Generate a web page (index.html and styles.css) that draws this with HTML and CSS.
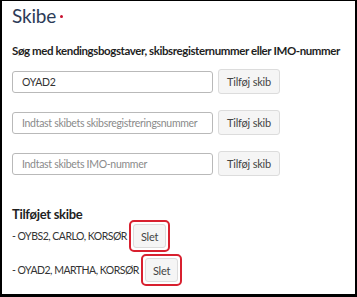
FILE: index.html
```html
<!DOCTYPE html>
<html lang="da">
  <head>
    <meta charset="UTF-8" />
    <title>Skibe</title>
    <link rel="stylesheet" href="styles.css">
  </head>
  <body>
    <div class="page">
      <h1 class="title">Skibe<span class="required"></span></h1>
      <p class="label">Søg med kendingsbogstaver, skibsregisternummer eller IMO-nummer</p>

      <div class="search-row">
        <input class="field" type="text" value="OYAD2" />
        <button class="btn">Tilføj skib</button>
      </div>
      <div class="search-row">
        <input class="field" type="text" placeholder="Indtast skibets skibsregistreringsnummer" />
        <button class="btn">Tilføj skib</button>
      </div>
      <div class="search-row">
        <input class="field" type="text" placeholder="Indtast skibets IMO-nummer" />
        <button class="btn">Tilføj skib</button>
      </div>

      <h2 class="subtitle">Tilføjet skibe</h2>
      <ul class="ships">
        <li class="ship">- OYBS2, CARLO, KORSØR<span class="focus"><button class="btn btn-small">Slet</button></span></li>
        <li class="ship">- OYAD2, MARTHA, KORSØR<span class="focus"><button class="btn btn-small">Slet</button></span></li>
      </ul>
    </div>
  </body>
</html>
```

FILE: styles.css
```css
body {
  margin: 0;
  padding: 1px 2px 3px 2px;
  background: #000;
  font-family: Lato, 'Open Sans', sans-serif;
  letter-spacing: -0.3px;
  color: #222;
}

.page {
  background: #fff;
  height: 293px;
  padding: 0 10px;
  box-sizing: border-box;
  overflow: hidden;
}

.title {
  margin: 0;
  padding-top: 3px;
  font-size: 19px;
  line-height: 24px;
  font-weight: 400;
  letter-spacing: -0.2px;
  color: #2c3b58;
  display: flex;
  align-items: center;
}

.required {
  display: inline-block;
  width: 3px;
  height: 3px;
  margin-left: 4px;
  margin-top: 1px;
  border-radius: 50%;
  background: #c8102e;
}

.label {
  margin: 15px 0 10px;
  font-size: 11.5px;
  line-height: 16px;
  font-weight: 700;
  letter-spacing: -0.4px;
  white-space: nowrap;
  color: #1f1f1f;
}

.search-row {
  display: flex;
  align-items: center;
  gap: 5px;
  margin-bottom: 16px;
}

.field {
  width: 201px;
  height: 22px;
  box-sizing: border-box;
  margin: 0;
  padding: 0 9px;
  border: 1px solid #b9b9b9;
  border-radius: 3px;
  font-family: inherit;
  font-size: 10.5px;
  letter-spacing: -0.3px;
  color: #333;
}

.field::placeholder {
  color: #8a8a8a;
}

.btn {
  height: 25px;
  padding: 0 8px;
  border: 1px solid #dcdcdc;
  border-radius: 3px;
  background: #f5f5f5;
  font-family: inherit;
  font-size: 11px;
  letter-spacing: -0.2px;
  color: #444;
}

.subtitle {
  margin: 30px 0 0;
  font-size: 13px;
  line-height: 16px;
  font-weight: 700;
  color: #1f1f1f;
}

.ships {
  list-style: none;
  margin: -2px 0 0;
  padding: 0;
}

.ship {
  display: flex;
  align-items: center;
  gap: 2px;
  font-size: 10.5px;
  letter-spacing: -0.5px;
  color: #333;
  margin-bottom: 2px;
}

.focus {
  display: inline-flex;
  padding: 2px;
  border: 2px solid #d8202f;
  border-radius: 5px;
}

.btn-small {
  height: 24px;
  padding: 0 7px;
}
```
